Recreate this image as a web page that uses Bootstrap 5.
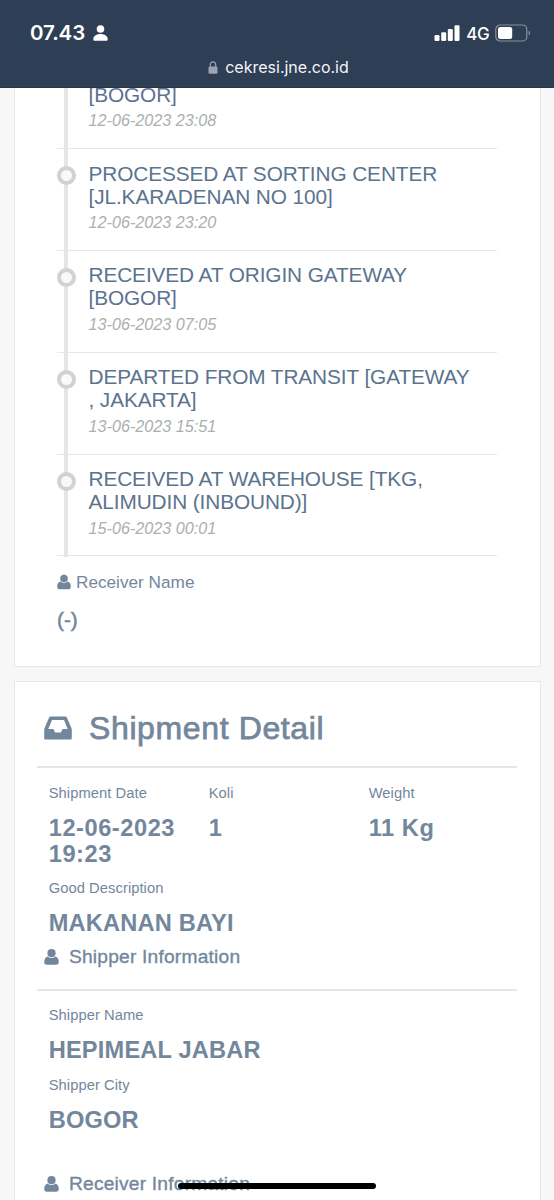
<!DOCTYPE html>
<html lang="en">
<head>
<meta charset="utf-8">
<meta name="viewport" content="width=device-width, initial-scale=1">
<title>cekresi.jne.co.id</title>
<link href="https://cdn.jsdelivr.net/npm/bootstrap@5.3.0/dist/css/bootstrap.min.css" rel="stylesheet">
<style>
body{height:1200px;background:#f7f7f7;color:#73879c;font-family:"Liberation Sans",Arial,sans-serif;}
svg{display:block;flex:none}
.phone-bar{height:87.5px;background:#2e3e54;border-bottom:1px solid #26364b;color:#fff;font-family:Inter,sans-serif;flex:none;z-index:2}
.status-line{height:24px;margin-top:21px;padding:0 23px 0 30px}
.clock{font-size:20.5px;font-weight:600;line-height:24px;letter-spacing:-.1px}
.net{font-size:17px;font-weight:500;line-height:24px;letter-spacing:-.6px;margin:1px 6px 0 6px}
.url-line{margin-top:12px;font-size:16px;line-height:20px;color:#f3f5f8;gap:7px;padding-left:3px}
.panel{width:527.5px;margin-left:13.5px;background:#fff;border:1.5px solid #e6e7e9;flex:none}
.track-panel{height:579px;border-top:0;padding:0 43px 0 42.5px}
.timeline{height:469px;overflow:hidden;flex:none}
.track-item{height:101.85px;border-bottom:1.5px solid #e6e7e9;position:relative;padding:13.6px 8px 0 31.5px;flex:none}
.track-item::before{content:"";position:absolute;left:7px;top:0;bottom:-1.5px;width:4px;background:#e6e6e6}
.track-item::after{content:"";position:absolute;left:0;top:17px;width:19px;height:19px;border:4.2px solid #d2d2d2;border-radius:50%;background:#f9f9f9}
.first-item{height:61.5px;padding-top:0}
.first-item h2{margin-top:-4px}
.first-item::after{display:none}
.track-item h2{font-size:20.8px;line-height:22.9px;font-weight:400;letter-spacing:-.1px;color:#5a738e;margin-bottom:0}
.when{font-size:16.2px;line-height:20px;font-style:italic;color:#aab0ae;margin-top:3.6px}
.rcv{font-size:17.2px;line-height:20px;gap:5px;margin-top:15px}
.dash{font-size:20.7px;line-height:24px;margin-top:16.5px;-webkit-text-stroke:.5px}
.detail-panel{margin-top:14px;height:560px;border-bottom:0;padding:0 23px 0 22.5px}
.detail-title{height:86.5px;padding:8px 0 0 7px;gap:17px;border-bottom:2.5px solid #e4e6ea}
.detail-title h1{font-size:32px;line-height:38px;font-weight:400;letter-spacing:.62px;-webkit-text-stroke:.75px;margin:0}
.fields-row{padding-top:15px}
.field{padding:0 11px 0 11.7px}
.field-label{font-size:14.75px;line-height:20px;letter-spacing:.05px}
.field-value{font-size:23.64px;line-height:26px;font-weight:700;letter-spacing:.18px;margin-top:12px}
.field-value.loose{letter-spacing:.55px}
.goods{margin-top:11px}
.sub-title{font-size:19.2px;line-height:24px;letter-spacing:.2px;-webkit-text-stroke:.35px;padding-left:6.5px;gap:10.500px}
.ruled{border-bottom:2.5px solid #e4e6ea;height:54.5px;padding-top:9px}
.shipper{margin-top:14.500px}
.receiver{margin-top:39px}
.home-pill{left:178px;bottom:11px;width:198px;height:6.5px;border-radius:4px;background:#000;z-index:5}
</style>
</head>
<body class="d-flex flex-column overflow-hidden position-relative">
<svg width="0" height="0" class="position-absolute">
<symbol id="user" viewBox="0 0 15 16"><circle cx="7.5" cy="4.2" r="4.1"/><path d="M3.7 7.5C1.300 8 .2 10.300 .2 13c0 1.800 1 2.800 2.800 2.800h9c1.800 0 2.800-1 2.800-2.800 0-2.700-1.100-5-3.500-5.500a5.500 5.500 0 0 1-7.600 0z"/></symbol>
</svg>
<header class="phone-bar">
  <div class="status-line d-flex align-items-center justify-content-between">
    <div class="d-flex align-items-center">
      <span class="clock">07.43</span>
      <svg class="ms-2" width="15" height="16" viewBox="0 0 15 16" fill="#fff"><circle cx="7.500" cy="4" r="3.800"/><path d="M.3 14.200C.3 11 3.200 8.900 7.500 8.900s7.200 2.100 7.200 5.300c0 1-.5 1.500-1.500 1.500H1.800C.8 15.700.3 15.200.3 14.200z"/></svg>
    </div>
    <div class="d-flex align-items-center">
      <svg width="26" height="16" viewBox="0 0 26 16" fill="#fff"><rect x=".5" y="10" width="5" height="6" rx="1.200"/><rect x="7.200" y="7.300" width="5" height="8.700" rx="1.200"/><rect x="13.800" y="4" width="5" height="12" rx="1.200"/><rect x="20.500" y=".3" width="5" height="15.700" rx="1.200"/></svg>
      <span class="net">4G</span>
      <svg width="36" height="18" viewBox="0 0 36 18" fill="none"><rect x=".8" y="1" width="31" height="16" rx="4.300" stroke="#8590a0" stroke-width="1.200"/><rect x="3" y="3" width="14.200" height="12" rx="2.300" fill="#fff"/><path d="M33.600 6.500c2 .8 2 4.200 0 5z" fill="#8590a0"/></svg>
    </div>
  </div>
  <div class="url-line d-flex align-items-center justify-content-center">
    <svg width="10" height="13" viewBox="0 0 10 13"><path d="M2.300 6V3.700a2.700 2.900 0 0 1 5.400 0V6" fill="none" stroke="#9ba3b3" stroke-width="1.200"/><rect x=".5" y="5.500" width="9" height="7.200" rx="1.300" fill="#9ba3b3"/></svg>
    <span>cekresi.jne.co.id</span>
  </div>
</header>

<section class="panel track-panel">
  <div class="timeline d-flex flex-column">
    <article class="track-item first-item"><h2>[BOGOR]</h2><div class="when">12-06-2023 23:08</div></article>
    <article class="track-item"><h2>PROCESSED AT SORTING CENTER<br>[JL.KARADENAN NO 100]</h2><div class="when">12-06-2023 23:20</div></article>
    <article class="track-item"><h2>RECEIVED AT ORIGIN GATEWAY<br>[BOGOR]</h2><div class="when">13-06-2023 07:05</div></article>
    <article class="track-item"><h2>DEPARTED FROM TRANSIT [GATEWAY<br>, JAKARTA]</h2><div class="when">13-06-2023 15:51</div></article>
    <article class="track-item"><h2>RECEIVED AT WAREHOUSE [TKG,<br>ALIMUDIN (INBOUND)]</h2><div class="when">15-06-2023 00:01</div></article>
  </div>
  <div class="rcv d-flex align-items-center"><svg width="14" height="16" fill="#73879c"><use href="#user"/></svg><span>Receiver Name</span></div>
  <div class="dash">(-)</div>
</section>

<section class="panel detail-panel">
  <div class="detail-title d-flex align-items-center">
    <svg width="28" height="24" viewBox="0 0 28 24"><path fill="#73879c" fill-rule="evenodd" d="M6.800.5h14.400c.9 0 1.500.4 1.800 1.200L27.400 12c.3.700.4 1.300.4 2v8.200c0 .8-.5 1.300-1.300 1.300h-25c-.8 0-1.300-.5-1.300-1.300V14c0-.7.100-1.300.4-2L5 1.700C5.300.9 5.900.5 6.800.5zM8 4.100 4.300 13h5.100l1.700 3.600h5.800l1.700-3.600h5.100L20 4.100z"/></svg>
    <h1>Shipment Detail</h1>
  </div>
  <div class="row g-0 fields-row">
    <div class="col-4 field"><div class="field-label">Shipment Date</div><div class="field-value loose">12-06-2023 19:23</div></div>
    <div class="col-4 field"><div class="field-label">Koli</div><div class="field-value">1</div></div>
    <div class="col-4 field"><div class="field-label">Weight</div><div class="field-value loose">11 Kg</div></div>
  </div>
  <div class="field goods"><div class="field-label">Good Description</div><div class="field-value">MAKANAN BAYI</div></div>
  <div class="sub-title ruled d-flex align-items-start"><svg class="mt-1" width="15" height="16" fill="#73879c"><use href="#user"/></svg><span>Shipper Information</span></div>
  <div class="field shipper"><div class="field-label">Shipper Name</div><div class="field-value">HEPIMEAL JABAR</div></div>
  <div class="field mt-2 pt-1"><div class="field-label">Shipper City</div><div class="field-value">BOGOR</div></div>
  <div class="sub-title receiver d-flex align-items-center"><svg width="15" height="16" fill="#73879c"><use href="#user"/></svg><span>Receiver Information</span></div>
</section>
<div class="home-pill position-absolute"></div>
<script src="https://cdn.jsdelivr.net/npm/bootstrap@5.3.0/dist/js/bootstrap.bundle.min.js"></script>
</body>
</html>
